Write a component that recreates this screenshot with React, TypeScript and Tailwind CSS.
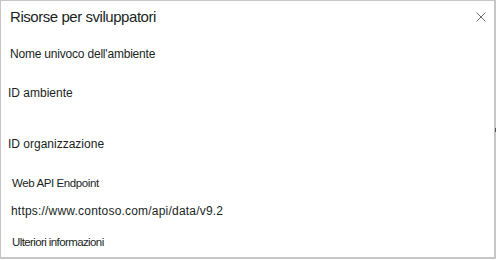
import React from "react";

export default function App() {
  const font = { fontFamily: '"Liberation Sans", Arial, sans-serif' };
  return (
    <div className="w-[498px] h-[260px] bg-white" style={font}>
      <div className="relative w-[496px] h-[259px] border border-[#c6c6c6] border-r-2 border-b-2 text-[#201f1e] flex flex-col">
        <div className="flex items-center justify-between h-[20px] mt-[6px] pl-[9px] pr-[8px]">
          <span className="text-[15px] tracking-[-0.45px] leading-[20px]">Risorse per sviluppatori</span>
          <svg width="10" height="10" viewBox="0 0 10 10">
            <path d="M0.5 0.5 L9.5 9.5 M9.5 0.5 L0.5 9.5" stroke="#6b6b6b" strokeWidth="1" fill="none" />
          </svg>
        </div>
        <div className="mt-[19px] pl-[9px] h-[16px] leading-[16px] text-[12px] tracking-[-0.2px]">Nome univoco dell'ambiente</div>
        <div className="mt-[23px] pl-[7px] h-[16px] leading-[16px] text-[12px]">ID ambiente</div>
        <div className="mt-[35px] pl-[7px] h-[16px] leading-[16px] text-[12px]">ID organizzazione</div>
        <div className="mt-[23px] pl-[11px] h-[16px] leading-[16px] text-[11.5px] tracking-[-0.4px]">Web API Endpoint</div>
        <div className="mt-[12px] pl-[10px] h-[16px] leading-[16px] text-[12px] tracking-[0.2px]">https://www.contoso.com/api/data/v9.2</div>
        <div className="mt-[15px] pl-[11px] h-[16px] leading-[16px] text-[11.5px] tracking-[-0.6px]">Ulteriori informazioni</div>
        <div className="absolute right-[-2px] top-[127px] w-[1px] h-[4px] bg-[#555]" />
      </div>
    </div>
  );
}
